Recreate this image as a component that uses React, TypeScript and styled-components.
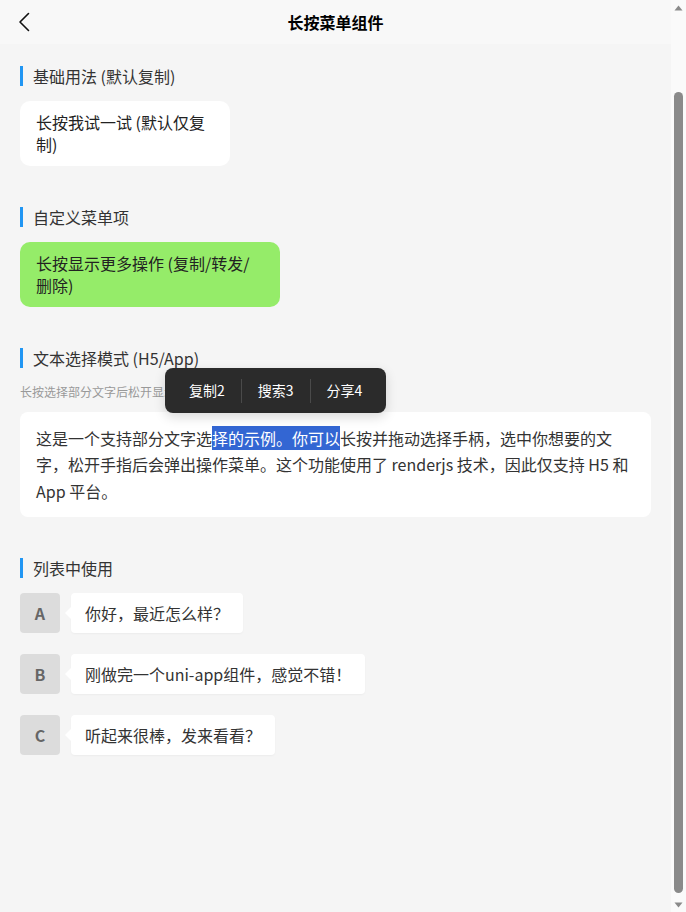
import * as React from 'react';
import styled, { createGlobalStyle } from 'styled-components';

const GlobalStyle = createGlobalStyle`
  html, body {
    margin: 0;
    padding: 0;
    background: #f5f5f5;
    font-family: "Noto Sans CJK SC", "Noto Sans", sans-serif;
    color: #333;
  }
  * {
    box-sizing: border-box;
  }
`;

const Shell = styled.div`
  display: flex;
  height: 100vh;
  overflow: hidden;
`;

const Main = styled.div`
  flex: 1;
  min-width: 0;
  display: flex;
  flex-direction: column;
`;

const NavBar = styled.header`
  position: relative;
  flex: none;
  height: 44px;
  display: flex;
  align-items: center;
  justify-content: center;
  background: #f8f8f8;
`;

const BackButton = styled.button`
  position: absolute;
  left: 10px;
  top: 8px;
  width: 28px;
  height: 28px;
  display: flex;
  align-items: center;
  justify-content: center;
  padding: 0;
  border: none;
  background: transparent;
`;

const NavTitle = styled.h1`
  margin: 0;
  font-size: 16px;
  font-weight: 700;
  color: #000;
`;

const Content = styled.main`
  flex: 1;
  overflow: hidden;
  padding: 22px 20px 0;
`;

/* page scrollbar, drawn since the shot keeps it */
const Rail = styled.div`
  flex: none;
  width: 15px;
  display: flex;
  flex-direction: column;
  background: #fafafa;
`;

const RailButton = styled.div`
  flex: none;
  height: 15px;
  display: flex;
  align-items: center;
  justify-content: center;
`;

const RailTrack = styled.div`
  flex: 1;
  display: flex;
  flex-direction: column;
  align-items: center;
`;

const Thumb = styled.div`
  width: 9px;
  border-radius: 5px;
  background: #8a8a8a;
`;

const Section = styled.section`
  position: relative;
  margin-bottom: 41px;
`;

const SectionTitle = styled.h2`
  margin: 0 0 15px;
  height: 20px;
  line-height: 20px;
  padding-left: 10px;
  border-left: 3px solid #2196f3;
  font-size: 16px;
  font-weight: 400;
  color: #333;
`;

const Card = styled.div<{ $width: number; $green?: boolean }>`
  width: ${({ $width }) => $width}px;
  padding: 11px 20px 11px 16px;
  border-radius: 10px;
  background: ${({ $green }) => ($green ? '#95ec69' : '#fff')};
  font-size: 16px;
  line-height: 21.5px;
  color: #222;
`;

const Hint = styled.p`
  margin: 0 0 11px;
  font-size: 12px;
  line-height: 18px;
  color: #999;
`;

const TextCard = styled.div`
  padding: 13px 16px;
  border-radius: 8px;
  background: #fff;
  font-size: 16px;
  line-height: 26.4px;
  color: #333;
`;

const Selected = styled.span`
  background: #3366d3;
  color: #fff;
`;

const Menu = styled.div`
  position: absolute;
  top: 20px;
  left: 145px;
  height: 45px;
  display: flex;
  align-items: center;
  padding: 0 8px;
  border-radius: 8px;
  background: #2b2b2b;
  box-shadow: 0 4px 12px rgba(0, 0, 0, 0.15);
  z-index: 5;
`;

const MenuItem = styled.div`
  padding: 0 16px;
  font-size: 14px;
  line-height: 45px;
  color: #fff;
  white-space: nowrap;
`;

const MenuDivider = styled.div`
  width: 1px;
  height: 24px;
  background: #4a4a4a;
`;

const MessageList = styled.div`
  display: flex;
  flex-direction: column;
  gap: 21px;
`;

const MessageRow = styled.div`
  display: flex;
  align-items: flex-start;
`;

const Avatar = styled.div`
  flex: none;
  width: 40px;
  height: 40px;
  display: flex;
  align-items: center;
  justify-content: center;
  border-radius: 4px;
  background: #dcdcdc;
  font-size: 16px;
  font-weight: 700;
  color: #666;
`;

const Bubble = styled.div`
  position: relative;
  margin-left: 11px;
  padding: 9px 14px;
  border-radius: 4px;
  background: #fff;
  font-size: 16px;
  line-height: 22px;
  color: #333;
  box-shadow: 0 1px 2px rgba(0, 0, 0, 0.04);

  &::before {
    content: '';
    position: absolute;
    left: -6px;
    top: 14px;
    border-style: solid;
    border-width: 6px 6px 6px 0;
    border-color: transparent #fff transparent transparent;
  }
`;

const messages = [
  { name: 'A', text: '你好，最近怎么样？' },
  { name: 'B', text: '刚做完一个uni-app组件，感觉不错！' },
  { name: 'C', text: '听起来很棒，发来看看？' },
];

const menuItems = ['复制2', '搜索3', '分享4'];

// scroll state shown in the shot: thumb offset and length inside the track
const scroll = { offset: 77, length: 801 };

const App: React.FC = () => (
  <>
    <GlobalStyle />
    <Shell>
      <Main>
        <NavBar>
          <BackButton aria-label='返回'>
            <svg width='14' height='22' viewBox='0 0 14 22' fill='none'>
              <polyline points='11.5,2.5 3,11 11.5,19.5' stroke='#111' strokeWidth='1.6' strokeLinecap='round' strokeLinejoin='round' />
            </svg>
          </BackButton>
          <NavTitle>长按菜单组件</NavTitle>
        </NavBar>
        <Content>
          <Section>
            <SectionTitle>基础用法 (默认复制)</SectionTitle>
            <Card $width={210}>长按我试一试 (默认仅复制)</Card>
          </Section>

          <Section>
            <SectionTitle>自定义菜单项</SectionTitle>
            <Card $width={260} $green>长按显示更多操作 (复制/转发/删除)</Card>
          </Section>

          <Section>
            <SectionTitle>文本选择模式 (H5/App)</SectionTitle>
            <Hint>长按选择部分文字后松开显示菜单</Hint>
            <TextCard>
              这是一个支持部分文字选<Selected>择的示例。你可以</Selected>长按并拖动选择手柄，选中你想要的文字，松开手指后会弹出操作菜单。这个功能使用了 renderjs 技术，因此仅支持 H5 和 App 平台。
            </TextCard>
            <Menu>
              {menuItems.map((item, i) => (
                <React.Fragment key={item}>
                  {i > 0 && <MenuDivider />}
                  <MenuItem>{item}</MenuItem>
                </React.Fragment>
              ))}
            </Menu>
          </Section>

          <Section>
            <SectionTitle>列表中使用</SectionTitle>
            <MessageList>
              {messages.map((m) => (
                <MessageRow key={m.name}>
                  <Avatar>{m.name}</Avatar>
                  <Bubble>{m.text}</Bubble>
                </MessageRow>
              ))}
            </MessageList>
          </Section>
        </Content>
      </Main>
      <Rail>
        <RailButton>
          <svg width='9' height='6' viewBox='0 0 9 6'>
            <polygon points='4.5,0.5 8.5,5.5 0.5,5.5' fill='#8a8a8a' />
          </svg>
        </RailButton>
        <RailTrack>
          <Thumb style={{ marginTop: scroll.offset, height: scroll.length }} />
        </RailTrack>
        <RailButton>
          <svg width='9' height='6' viewBox='0 0 9 6'>
            <polygon points='0.5,0.5 8.5,0.5 4.5,5.5' fill='#8a8a8a' />
          </svg>
        </RailButton>
      </Rail>
    </Shell>
  </>
);

export default App;
